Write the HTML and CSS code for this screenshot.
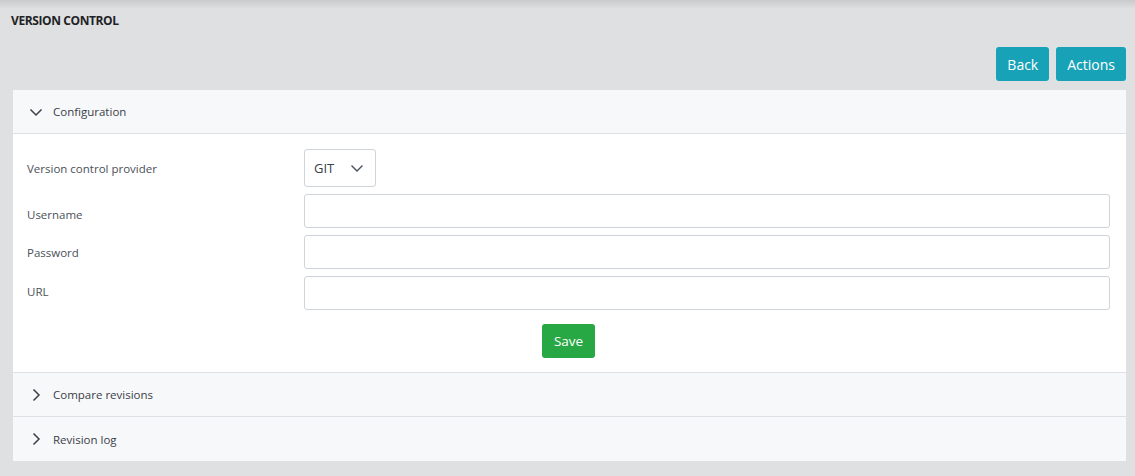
FILE: index.html
```html
<!DOCTYPE html>
<html>
<head>
<meta charset="utf-8">
<link rel="stylesheet" href="styles.css">
</head>
<body>
<div class="page">
  <h1 class="title">VERSION CONTROL</h1>
  <div class="toolbar">
    <button class="btn btn-info">Back</button>
    <button class="btn btn-info">Actions</button>
  </div>
  <div class="accordion">
    <div class="section open">
      <div class="section-header">
        <svg class="chev" width="14" height="14" viewBox="0 0 14 14"><path d="M1.5 4.5 L7 10 L12.5 4.5" fill="none" stroke="#3a4048" stroke-width="1.5"/></svg>
        <span>Configuration</span>
      </div>
      <div class="section-body">
        <div class="form-row row-select">
          <label class="label">Version control provider</label>
          <div class="select">
            <span>GIT</span>
            <svg width="14" height="14" viewBox="0 0 14 14"><path d="M1.5 4.5 L7 10 L12.5 4.5" fill="none" stroke="#4a5058" stroke-width="1.4"/></svg>
          </div>
        </div>
        <div class="form-row">
          <label class="label label-low">Username</label>
          <input class="input" type="text">
        </div>
        <div class="form-row">
          <label class="label">Password</label>
          <input class="input" type="password">
        </div>
        <div class="form-row">
          <label class="label label-high">URL</label>
          <input class="input" type="text">
        </div>
        <div class="actions">
          <button class="btn btn-success">Save</button>
        </div>
      </div>
    </div>
    <div class="section">
      <div class="section-header">
        <svg class="chev" width="14" height="14" viewBox="0 0 14 14"><path d="M4.5 1.5 L10 7 L4.5 12.5" fill="none" stroke="#3a4048" stroke-width="1.5"/></svg>
        <span>Compare revisions</span>
      </div>
    </div>
    <div class="section last">
      <div class="section-header">
        <svg class="chev" width="14" height="14" viewBox="0 0 14 14"><path d="M4.5 1.5 L10 7 L4.5 12.5" fill="none" stroke="#3a4048" stroke-width="1.5"/></svg>
        <span>Revision log</span>
      </div>
    </div>
  </div>
</div>
</body>
</html>
```
FILE: styles.css
```css
* { box-sizing: border-box; }
html, body { margin: 0; padding: 0; }
body {
  background: #dfe0e2;
  font-family: "Open Sans", "Noto Sans", sans-serif;
  color: #3a4048;
  width: 1135px;
  height: 476px;
  overflow: hidden;
}
.page {
  padding: 13px 9px 0 13px;
  background: linear-gradient(to bottom, #c9cacc 0px, #dfe0e2 9px);
  height: 476px;
}
.title {
  margin: 0 0 0 -2px;
  font-size: 12px;
  font-weight: 700;
  color: #1e2226;
  letter-spacing: -0.4px;
  line-height: 16px;
}
.toolbar {
  display: flex;
  justify-content: flex-end;
  gap: 7px;
  margin-top: 18px;
  margin-bottom: 9px;
}
.btn {
  font-family: inherit;
  font-size: 14px;
  border: none;
  border-radius: 3px;
  color: #fff;
  height: 34px;
  padding: 0 11px;
  cursor: pointer;
}
.btn-info { background: #18a2b7; }
.btn-success { background: #28a745; padding: 0 12px; font-size: 13.5px; }
.accordion {
  background: #fff;
}
.section + .section { border-top: 1px solid #dde1e6; }
.section-header {
  height: 43px;
  background: #f7f8fa;
  display: flex;
  align-items: center;
  padding-left: 16px;
  font-size: 11.5px;
  color: #3a4048;
  gap: 10px;
}
.section.open .section-header { border-bottom: 1px solid #dde1e6; height: 44px; }
.section.last .section-header { height: 44px; }
.chev { flex: none; }
.section-body {
  padding: 15px 16px 14px 14px;
  background: #fff;
}
.form-row {
  display: flex;
  align-items: center;
  margin-bottom: 7px;
}
.row-select { margin-bottom: 7px; }
.label {
  width: 277px;
  flex: none;
  font-size: 11.5px;
  color: #4a5058;
}
.label-low { padding-top: 6px; }
.label-high { padding-bottom: 3px; }
.select {
  width: 72px;
  height: 38px;
  border: 1px solid #ced4da;
  border-radius: 3px;
  display: flex;
  align-items: center;
  justify-content: space-between;
  padding: 0 11px 0 9px;
  font-size: 13px;
  color: #3a4048;
}
.input {
  flex: 1;
  height: 34px;
  border: 1px solid #ced4da;
  border-radius: 3px;
  background: #fff;
  font-family: inherit;
}
.actions {
  display: flex;
  justify-content: center;
  margin-top: 14px;
}
```
